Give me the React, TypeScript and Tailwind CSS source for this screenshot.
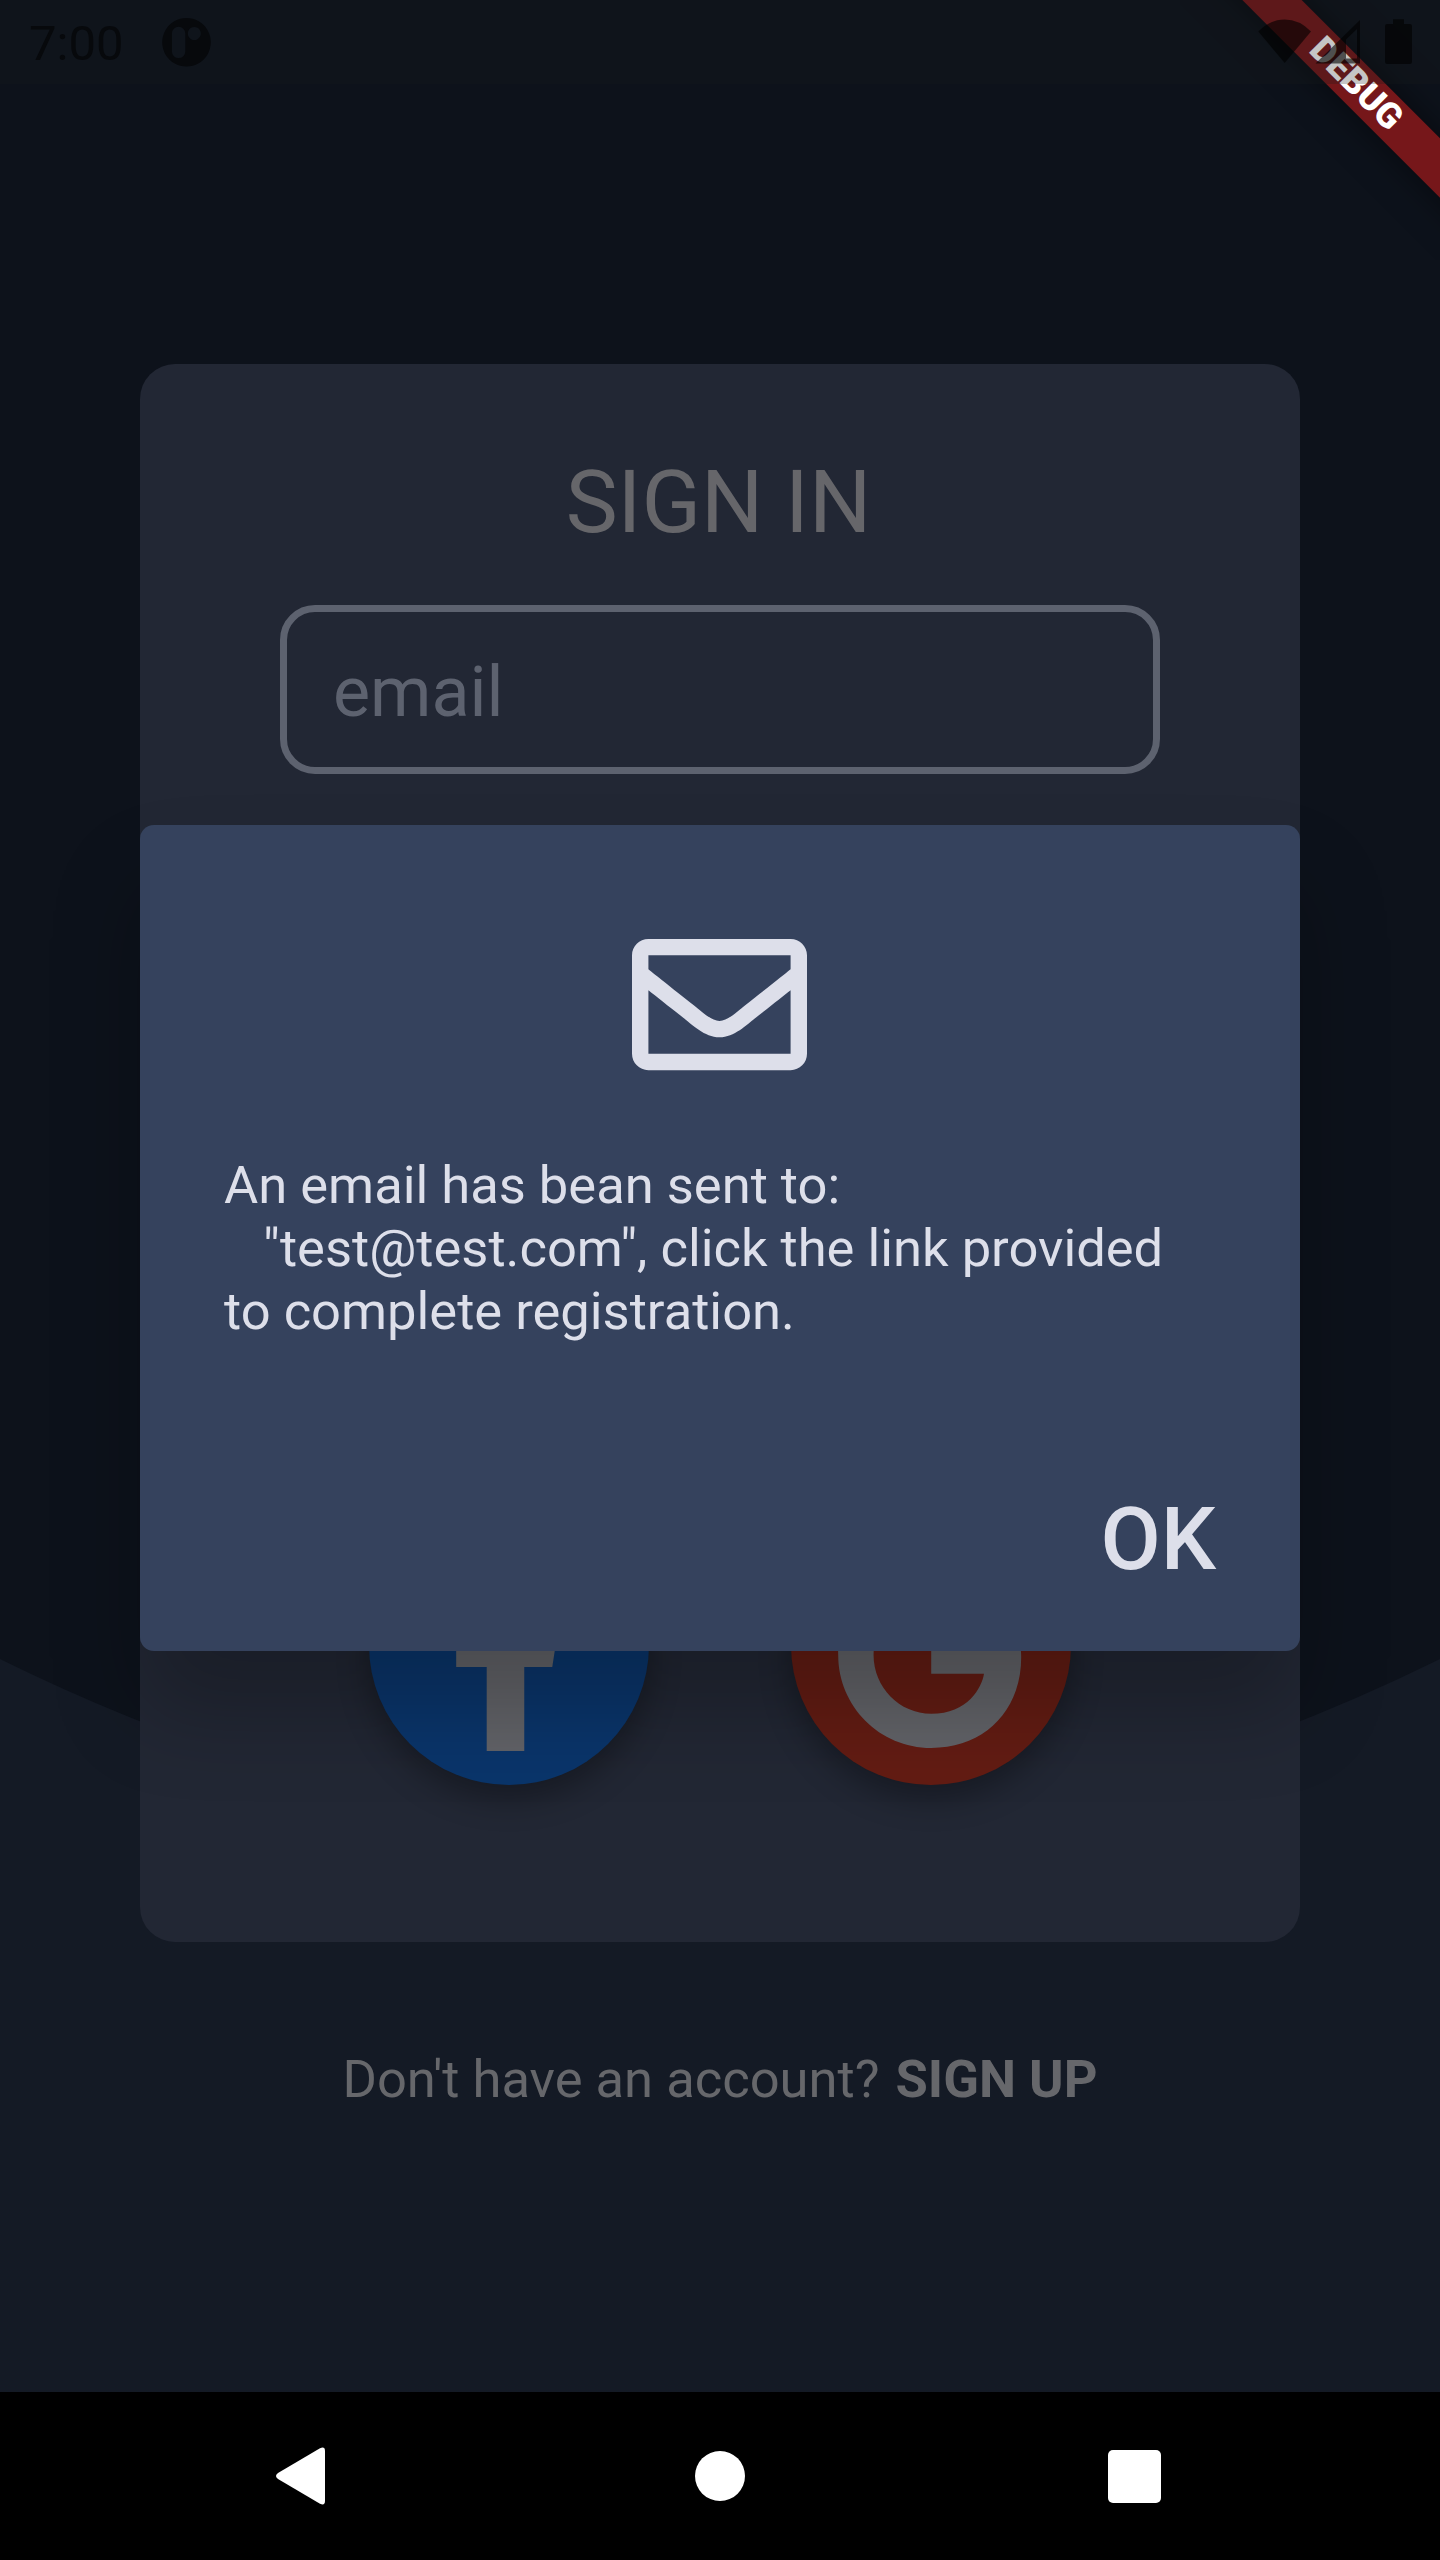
import type { ReactNode } from "react";
import { FaRegEnvelope } from "react-icons/fa";

function StatusBar() {
  return (
    <div className="absolute inset-x-0 top-0 z-30 flex h-[84px] items-start justify-between bg-[#171b1c]/25">
      <div className="flex">
        <span className="ml-[29px] mt-[14px] text-[49px] leading-[60px] text-[#07090c]">7:00</span>
        <svg className="ml-[39px] mt-[18px]" width="49" height="49" viewBox="0 0 49 49" fill="#07090c">
          <path
            fillRule="evenodd"
            d="M24.5 0a24.3 24.3 0 1 0 .01 0zM16.6 8.7a6.7 6.7 0 0 1 6.7 6.7v18a6.7 6.7 0 0 1-13.4 0v-18a6.7 6.7 0 0 1 6.7-6.7zM32.3 9a6.5 6.5 0 1 1-.01 0z"
          />
        </svg>
      </div>
      <svg width="182" height="84" viewBox="1258 0 182 84" fill="#000" fillOpacity="0.6">
        <path d="M1284.7 63 1258.3 31.5Q1270 19.5 1284.7 19.5T1311 31.5z" />
        <path fillRule="evenodd" d="M1315.5 63.5 1360 20v43.5zM1346 39.5v19h11V29z" />
        <path d="M1393 24v-4.7h11V24h6a2 2 0 0 1 2 2v36a2 2 0 0 1-2 2h-23a2 2 0 0 1-2-2V26a2 2 0 0 1 2-2z" />
      </svg>
    </div>
  );
}

function DebugBanner() {
  return (
    <div className="absolute right-0 top-0 z-20 h-[260px] w-[260px] overflow-hidden">
      <div className="absolute left-[-24px] top-[63px] flex h-[42px] w-[400px] rotate-45 items-center justify-center bg-[#76171a] text-[35.7px] font-black leading-none text-white shadow-[0_0_36px_rgba(0,0,0,0.5)]">
        DEBUG
      </div>
    </div>
  );
}

function SocialButton({ color, children }: { color: string; children: ReactNode }) {
  return (
    <button
      className="h-[280px] w-[280px] rounded-full shadow-[0_14px_32px_rgba(0,0,0,0.32)]"
      style={{ backgroundColor: color }}
    >
      <svg width="280" height="280" viewBox="0 0 280 280" fill="#626368">
        {children}
      </svg>
    </button>
  );
}

function SignInCard() {
  return (
    <section className="mx-[140px] mt-[364px] flex h-[1578px] flex-col items-center rounded-[35px] bg-[#222734]">
      <h1 className="mt-[87px] mr-[3px] text-[87.5px] leading-[102px] text-[#66666a]">SIGN IN</h1>
      <div className="mt-[52px] flex h-[169px] w-[880px] items-center rounded-[35px] border-[7px] border-[#5d626f] pl-[46px] pt-[5px] text-[70px] text-[#5d626f]">
        email
      </div>
      <div className="mt-auto mb-[157px] flex gap-[142px]">
        <SocialButton color="#0a356b">
          <path
            transform="translate(78.6 54) scale(.375)"
            d="M279.14 288l14.22-92.66h-88.91v-60.13c0-25.35 12.42-50.06 52.24-50.06h40.42V6.26S260.43 0 225.36 0c-73.22 0-121.08 44.38-121.08 124.72v70.62H22.89V288h81.39v224h100.17V288z"
          />
        </SocialButton>
        <SocialButton color="#631c13">
          <path
            transform="translate(47.2 54) scale(.375)"
            d="M488 261.8C488 403.3 391.1 504 248 504 110.8 504 0 393.2 0 256S110.8 8 248 8c66.8 0 123 24.5 166.3 64.9l-67.5 64.9C258.5 52.6 94.3 116.6 94.3 256c0 86.5 69.1 156.6 153.7 156.6 98.2 0 135-70.4 140.8-106.9H248v-85.3h236.1c2.3 12.7 3.9 24.9 3.9 41.4z"
          />
        </SocialButton>
      </div>
    </section>
  );
}

function EmailSentDialog() {
  return (
    <div
      role="dialog"
      className="absolute left-[140px] top-[825px] z-10 flex h-[826px] w-[1160px] flex-col rounded-[14px] bg-[#35425d] px-[84px] text-[#dddfea] shadow-[0_60px_90px_rgba(0,0,0,0.24)]"
    >
      <FaRegEnvelope className="mt-[92px] mr-px self-center text-[175px]" />
      <p className="mt-[62px] whitespace-pre text-[52.5px] leading-[63px]">
        {'An email has bean sent to:\n   "test@test.com", click the link provided\nto complete registration.'}
      </p>
      <button className="mt-auto mb-[61px] self-end text-[87.5px] font-medium leading-[102px]">OK</button>
    </div>
  );
}

function NavigationBar() {
  return (
    <nav className="flex h-[168px] items-center bg-black text-white">
      <svg className="ml-[276px]" width="49" height="58" viewBox="0 0 49 58" fill="currentColor">
        <path d="M2 26 44 1.2Q49-1 49 4v50q0 5-5 2.8L2 32q-4-3 0-6z" />
      </svg>
      <span className="ml-[370px] h-[50px] w-[50px] rounded-full bg-white" />
      <span className="ml-[363px] h-[53px] w-[53px] rounded-[5px] bg-white" />
    </nav>
  );
}

export default function App() {
  return (
    <div className="relative flex h-[2560px] w-[1440px] flex-col overflow-hidden bg-[#0d121b] font-[Roboto,sans-serif]">
      <svg className="absolute left-0 top-[1659px]" width="1440" height="733" viewBox="0 0 1440 733">
        <path d="M0 0Q720 355 1440 0V733H0z" fill="#141a25" />
      </svg>
      <main className="relative flex flex-1 flex-col">
        <SignInCard />
        <p className="mt-[106px] whitespace-pre text-center text-[52.5px] leading-[62px] text-[#66676b]">
          Don't have an account? <b className="ml-[3px] font-bold">SIGN UP</b>
        </p>
      </main>
      <NavigationBar />
      <EmailSentDialog />
      <DebugBanner />
      <StatusBar />
    </div>
  );
}
